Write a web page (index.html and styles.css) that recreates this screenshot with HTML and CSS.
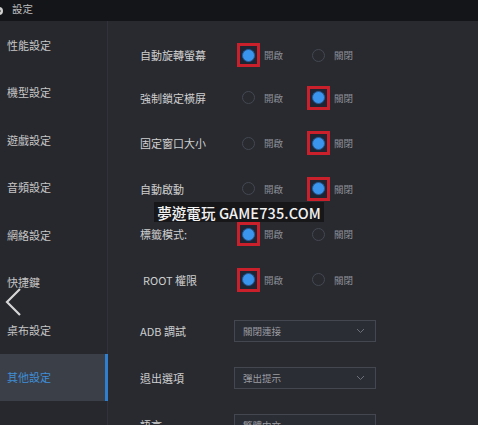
FILE: index.html
```html
<!DOCTYPE html>
<html>
<head>
<meta charset="utf-8">
<link rel="stylesheet" href="styles.css">
</head>
<body>
<div class="app">
  <header class="topbar">
    <svg class="topicon" width="10" height="12" viewBox="0 0 10 12"><circle cx="2" cy="6" r="4" fill="#cfcfcf"/><circle cx="2" cy="6" r="1.6" fill="#15161a"/></svg>
    <span class="title">設定</span>
  </header>
  <div class="body">
    <nav class="sidebar">
      <div class="nav-item">性能設定</div>
      <div class="nav-item">機型設定</div>
      <div class="nav-item">遊戲設定</div>
      <div class="nav-item">音頻設定</div>
      <div class="nav-item">網絡設定</div>
      <div class="nav-item">快捷鍵</div>
      <div class="nav-item">桌布設定</div>
      <div class="nav-item active">其他設定</div>
    </nav>
    <main class="content">
      <div class="row first">
        <div class="label">自動旋轉螢幕</div>
        <div class="opt"><span class="box hl"><span class="radio on"></span></span><span class="otext">開啟</span></div>
        <div class="opt"><span class="box"><span class="radio"></span></span><span class="otext">關閉</span></div>
      </div>
      <div class="row">
        <div class="label">強制鎖定橫屏</div>
        <div class="opt"><span class="box"><span class="radio"></span></span><span class="otext">開啟</span></div>
        <div class="opt"><span class="box hl"><span class="radio on"></span></span><span class="otext">關閉</span></div>
      </div>
      <div class="row">
        <div class="label">固定窗口大小</div>
        <div class="opt"><span class="box"><span class="radio"></span></span><span class="otext">開啟</span></div>
        <div class="opt"><span class="box hl"><span class="radio on"></span></span><span class="otext">關閉</span></div>
      </div>
      <div class="row">
        <div class="label">自動啟動</div>
        <div class="opt"><span class="box"><span class="radio"></span></span><span class="otext">開啟</span></div>
        <div class="opt"><span class="box hl"><span class="radio on"></span></span><span class="otext">關閉</span></div>
      </div>
      <div class="row">
        <div class="label">標籤模式:</div>
        <div class="opt"><span class="box hl"><span class="radio on"></span></span><span class="otext">開啟</span></div>
        <div class="opt"><span class="box"><span class="radio"></span></span><span class="otext">關閉</span></div>
      </div>
      <div class="row">
        <div class="label indent">ROOT 權限</div>
        <div class="opt"><span class="box hl"><span class="radio on"></span></span><span class="otext">開啟</span></div>
        <div class="opt"><span class="box"><span class="radio"></span></span><span class="otext">關閉</span></div>
      </div>
      <div class="row sel-row gap">
        <div class="label short">ADB 調試</div>
        <div class="select"><span>關閉連接</span><svg width="9" height="6" viewBox="0 0 9 6"><path d="M1 1 L4.5 4.5 L8 1" fill="none" stroke="#6d7078" stroke-width="1"/></svg></div>
      </div>
      <div class="row sel-row">
        <div class="label short">退出選項</div>
        <div class="select"><span>彈出提示</span><svg width="9" height="6" viewBox="0 0 9 6"><path d="M1 1 L4.5 4.5 L8 1" fill="none" stroke="#6d7078" stroke-width="1"/></svg></div>
      </div>
      <div class="row sel-row">
        <div class="label short">語言</div>
        <div class="select"><span>繁體中文</span></div>
      </div>
    </main>
  </div>
  <svg class="chevron" width="18" height="28" viewBox="0 0 18 28"><path d="M16 1 L3 14 L16 27" fill="none" stroke="#d6d6d6" stroke-width="2.2"/></svg>
  <div class="watermark">夢遊電玩 GAME735.COM</div>
</div>
</body>
</html>
```
FILE: styles.css
```css
* { box-sizing: border-box; margin: 0; padding: 0; }
html, body { width: 478px; height: 425px; overflow: hidden; background: #282a30; }
body { font-family: "Noto Sans CJK TC", "Noto Sans", sans-serif; color: #c9c9c9; }
.app { position: relative; width: 478px; height: 425px; display: flex; flex-direction: column; overflow: hidden; }
.topbar { height: 21px; flex-shrink: 0; background: #141519; display: flex; align-items: center; font-size: 10.5px; color: #bdbdbd; }
.topicon { margin-left: -3px; margin-right: 5px; }
.title { line-height: 1; margin-top: -2px; }
.body { flex: 1; min-height: 0; display: flex; overflow: hidden; }
.sidebar { width: 108px; flex-shrink: 0; background: #26282e; border-right: 1px solid #30333a; display: flex; flex-direction: column; }
.nav-item { height: 47.5px; display: flex; align-items: center; padding-left: 7px; font-size: 11px; color: #c6c6c6; flex-shrink: 0; }
.nav-item.active { background: #3b3f48; color: #3f8fd8; margin-right: -1px; border-right: 3px solid #2f7fd0; }
.content { flex: 1; min-height: 0; background: #282a30; padding-left: 32px; display: flex; flex-direction: column; }
.row { height: 45.5px; display: flex; align-items: center; flex-shrink: 0; }
.row.first { height: 40px; margin-top: 14px; }
.row.gap { margin-top: 5px; }
.row.sel-row { height: 47px; }
.label { width: 97px; font-size: 11px; color: #cfcfcf; }
.label.indent { padding-left: 3px; }
.label.short { width: 94px; }
.opt { width: 70px; display: flex; align-items: center; }
.box { width: 23px; height: 24px; display: flex; align-items: center; justify-content: center; border: 3px solid transparent; }
.box.hl { border-color: #c9202b; background: #1f2532; }
.radio { width: 13px; height: 13px; border-radius: 50%; border: 1px solid #454851; }
.radio.on { background: #3a95ee; border: 1.5px solid #2b5e9a; box-shadow: 0 0 0 1px #1c2a40; }
.otext { margin-left: 4px; font-size: 9.5px; color: #8e9097; }
.select { width: 142px; height: 22px; border: 1px solid #44474f; background: #2b2d34; display: flex; align-items: center; justify-content: space-between; padding: 0 10px 0 8px; font-size: 9.5px; color: #9a9ca2; }
.chevron { position: absolute; left: 4px; top: 288px; }
.watermark { position: absolute; left: 154px; top: 202px; width: 170px; height: 20px; background: #17171a; color: #f2f2f2; font-size: 14.5px; font-weight: 500; display: flex; align-items: center; justify-content: center; white-space: nowrap; letter-spacing: 0.1px; }
```
